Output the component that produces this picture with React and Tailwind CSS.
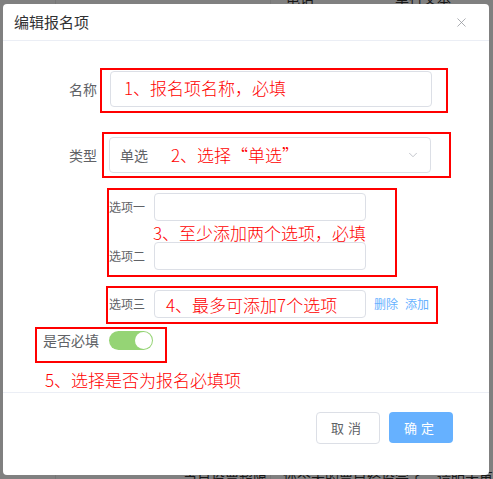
import { ChevronDown, X } from 'lucide-react';

const font = { fontFamily: '"Noto Sans CJK SC", "Noto Sans", sans-serif' };

function Note({ className, children }) {
  return (
    <div className={`absolute pointer-events-none ${className}`}>{children}</div>
  );
}

export default function App() {
  return (
    <div className="relative h-[479px] w-[493px] overflow-hidden bg-[#808080] text-[#181818]" style={font}>
      {/* page behind the overlay */}
      <div className="absolute left-[55px] top-0 h-full w-px bg-[#767676]" />
      <div className="absolute left-[270px] top-0 h-full w-px bg-[#777777]" />
      <div className="absolute left-[286px] top-[-12px] text-[14px]">电话</div>
      <div className="absolute left-[395px] top-[-12px] text-[14px]">单行文本</div>
      <div className="absolute left-[183px] top-[467px] text-[14px]">当日投票超限</div>
      <div className="absolute left-[283px] top-[467px] text-[14px]">您今天的票已经投完了，请明天再来吧</div>

      {/* dialog */}
      <div className="absolute left-[3px] top-[4px] h-[471px] w-[486px] rounded-[4px] bg-white">
        <div className="flex h-[37px] items-center justify-between border-b border-[#ebeef5] pl-[11px] pr-[20px]">
          <span className="text-[15px] text-[#303133]">编辑报名项</span>
          <X size={15} strokeWidth={1.2} className="text-[#909399]" />
        </div>

        <div className="flex flex-col pt-[30px]">
          <div className="flex items-center">
            <label className="w-[95px] pr-[1px] text-right text-[14px] text-[#606266]">名称</label>
            <div className="ml-[12px] h-[36px] w-[322px] rounded-[4px] border border-[#dcdfe6]" />
          </div>

          <div className="mt-[30px] flex items-center">
            <label className="w-[95px] pr-[1px] text-right text-[14px] text-[#606266]">类型</label>
            <div className="ml-[11px] flex h-[36px] w-[322px] items-center justify-between rounded-[4px] border border-[#dcdfe6] pl-[10px] pr-[10px]">
              <span className="text-[14px] text-[#606266]">单选</span>
              <ChevronDown size={14} strokeWidth={1.3} className="text-[#b0b4bc]" />
            </div>
          </div>

          <div className="mt-[20px] flex flex-col gap-[21px] pl-[106px]">
            <div className="flex items-center">
              <span className="w-[45px] text-[12px] text-[#606266]">选项一</span>
              <div className="h-[28px] w-[212px] rounded-[4px] border border-[#dcdfe6]" />
            </div>
            <div className="flex items-center">
              <span className="w-[45px] text-[12px] text-[#606266]">选项二</span>
              <div className="h-[28px] w-[212px] rounded-[4px] border border-[#dcdfe6]" />
            </div>
            <div className="-mt-[1px] flex items-center">
              <span className="w-[45px] text-[12px] text-[#606266]">选项三</span>
              <div className="h-[28px] w-[212px] rounded-[4px] border border-[#dcdfe6]" />
              <span className="ml-[8px] text-[12px] text-[#66b1ff]">删除</span>
              <span className="ml-[7px] text-[12px] text-[#66b1ff]">添加</span>
            </div>
          </div>

          <div className="mt-[12px] flex h-[20px] items-center pl-[40px]">
            <span className="w-[66px] text-[14px] text-[#606266]">是否必填</span>
            <div className="flex h-[19px] w-[44px] items-center justify-end rounded-full bg-[#95d475] pr-[1px]">
              <div className="h-[17px] w-[17px] rounded-full bg-white" />
            </div>
          </div>
        </div>

        <div className="absolute left-0 right-0 top-[388px] border-t border-[#ebeef5]" />
        <div className="absolute right-[36px] top-[408px] flex gap-[9px]">
          <button className="h-[32px] w-[64px] rounded-[4px] border border-[#dcdfe6] bg-white text-[13px] tracking-[4px] text-[#606266]">
            取消
          </button>
          <button className="h-[31px] w-[64px] rounded-[4px] bg-[#66b1ff] text-[13px] tracking-[4px] text-white">
            确定
          </button>
        </div>

        {/* annotations */}
        <Note className="left-[97px] top-[64px] h-[45px] w-[348px] border-2 border-[#ff0000]" />
        <Note className="left-[121px] top-[72px] text-[17px] font-light leading-[24px] text-[#ff0000]">1、报名项名称，必填</Note>
        <Note className="left-[99px] top-[128px] h-[46px] w-[349px] border-2 border-[#ff0000]" />
        <Note className="left-[168px] top-[139px] text-[17px] font-light leading-[24px] text-[#ff0000]">2、选择“单选”</Note>
        <Note className="left-[104px] top-[184px] h-[89px] w-[290px] border-2 border-[#ff0000]" />
        <Note className="left-[150px] top-[217px] text-[17px] font-light leading-[24px] text-[#ff0000]">3、至少添加两个选项，必填</Note>
        <Note className="left-[103px] top-[282px] h-[38px] w-[332px] border-2 border-[#ff0000]" />
        <Note className="left-[163px] top-[289px] text-[17px] font-light leading-[24px] text-[#ff0000]">4、最多可添加7个选项</Note>
        <Note className="left-[32px] top-[323px] h-[36px] w-[132px] border-2 border-[#ff0000]" />
        <Note className="left-[42px] top-[364px] text-[17px] font-light leading-[24px] text-[#ff0000]">5、选择是否为报名必填项</Note>
      </div>
    </div>
  );
}
